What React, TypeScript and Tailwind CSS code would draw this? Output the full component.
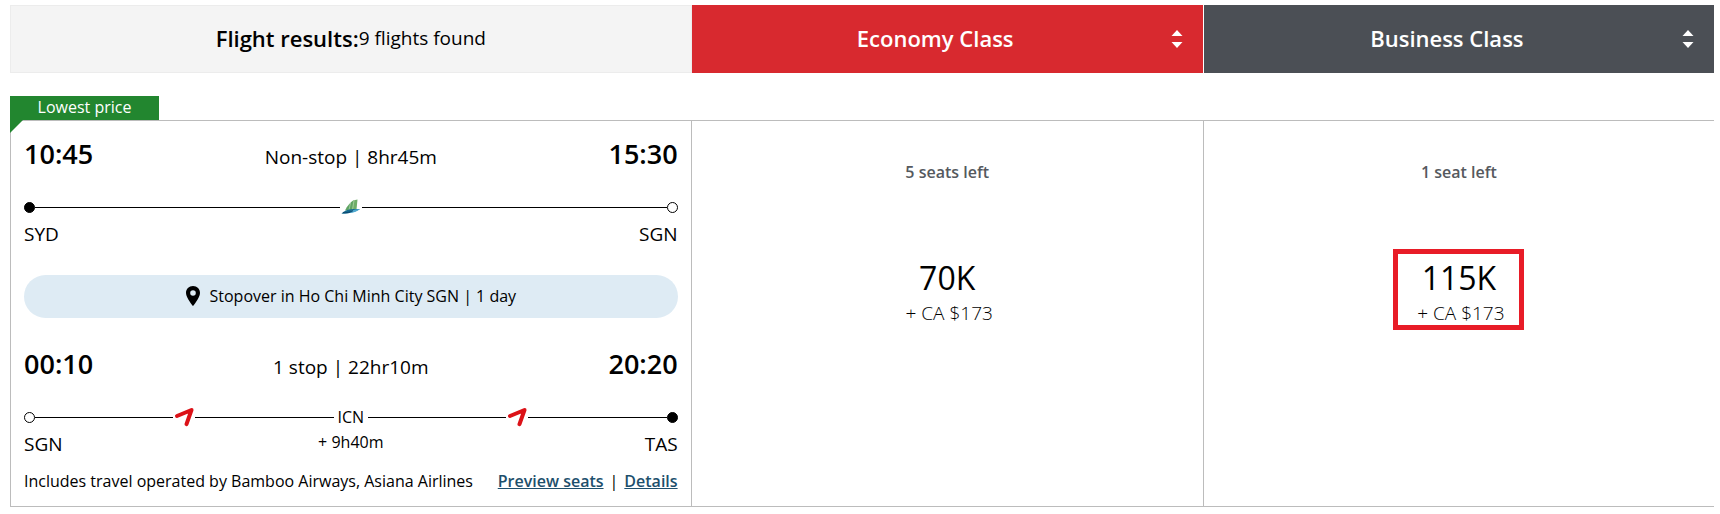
import React from 'react';

type Stop = {
    code: string;
    layover: string;
};

type Leg = {
    departs: string;
    arrives: string;
    from: string;
    to: string;
    summary: string;
    carriers: ('bamboo' | 'asiana')[];
    stop?: Stop;
    fromFilled: boolean;
};

type Fare = {
    id: string;
    seats: string;
    points: string;
    cash: string;
    highlighted: boolean;
};

const legs: Leg[] = [
    {
        departs: '10:45',
        arrives: '15:30',
        from: 'SYD',
        to: 'SGN',
        summary: 'Non-stop | 8hr45m',
        carriers: ['bamboo'],
        fromFilled: true,
    },
    {
        departs: '00:10',
        arrives: '20:20',
        from: 'SGN',
        to: 'TAS',
        summary: '1 stop | 22hr10m',
        carriers: ['asiana', 'asiana'],
        stop: { code: 'ICN', layover: '+ 9h40m' },
        fromFilled: false,
    },
];

const fares: Fare[] = [
    {
        id: 'economy',
        seats: '5 seats left',
        points: '70K',
        cash: '+ CA $173',
        highlighted: false,
    },
    {
        id: 'business',
        seats: '1 seat left',
        points: '115K',
        cash: '+ CA $173',
        highlighted: true,
    },
];

const SortIcon = () => (
    <svg className="h-5 w-3" viewBox="0 0 12 20" fill="currentColor">
        <path d="M6 1l5.5 6H.5z" />
        <path d="M6 19l5.5-6H.5z" />
    </svg>
);

const PinIcon = () => (
    <svg className="h-5 w-4" viewBox="0 0 16 20">
        <path
            fillRule="evenodd"
            d="M8 0C3.900 0 1 3 1 6.900 1 11.500 8 20 8 20s7-8.500 7-13.100C15 3 12.100 0 8 0zm0 4.200a2.800 2.800 0 1 1 0 5.600 2.800 2.800 0 0 1 0-5.600z"
        />
    </svg>
);

// Small airline marks that sit on the route line
const CarrierIcon = ({ carrier }: { carrier: 'bamboo' | 'asiana' }) =>
    carrier === 'bamboo' ? (
        <svg className="h-5 w-[22px]" viewBox="0 0 22 20">
            <path d="M5 13.500C7 9 10.500 5 13.500 3.200L13 13z" fill="#5fa463" />
            <path d="M13 3.500L17.500 2.500 16.500 12.500 12 13z" fill="#6fae68" />
            <path d="M10.500 6L9 13M14 3.500L12.500 13" stroke="#c3dfbd" strokeWidth="0.6" />
            <path d="M1.500 16.500C5 12.500 11 11.500 20 12c-3 1.800-6 3-9.500 3.800-3 .8-6 1.200-9 .7z" fill="#12698f" />
            <path d="M10.500 16c3.500-.4 7-1.800 9.500-4-3.500 0-6.500.8-9 2z" fill="#4fa9cf" />
            <path d="M3 15.500c3.500.5 7-.2 10-1.800" stroke="#0c4770" strokeWidth="1" fill="none" />
        </svg>
    ) : (
        <svg className="h-5 w-[22px]" viewBox="0 0 22 20">
            <path
                d="M4 9L18.500 3 13.500 17.200"
                fill="none"
                stroke="#dc1218"
                strokeWidth="4"
                strokeLinecap="round"
                strokeLinejoin="round"
            />
            <path d="M14 5.500L20.300 1.500 17 10z" fill="#dc1218" />
        </svg>
    );

const Dot = ({ filled }: { filled: boolean }) => (
    <span
        className={`size-[11px] rounded-full border border-black ${filled ? 'bg-black' : 'bg-white'}`}
    />
);

const Line = () => <span className="h-px flex-1 bg-black" />;

const FlightLeg = ({ leg }: { leg: Leg }) => (
    <section>
        <div className="grid grid-cols-[1fr_auto_1fr] items-baseline leading-9">
            <span className="text-[27px] leading-9 font-semibold">{leg.departs}</span>
            <span className="text-[19px] leading-9">{leg.summary}</span>
            <span className="text-right text-[27px] leading-9 font-semibold">{leg.arrives}</span>
        </div>

        <div className="mt-[22px] flex h-5 items-center">
            <Dot filled={leg.fromFilled} />
            <Line />
            <CarrierIcon carrier={leg.carriers[0]} />
            <Line />
            {leg.stop && (
                <>
                    <span className="px-1 text-base leading-5">{leg.stop.code}</span>
                    <Line />
                    <CarrierIcon carrier={leg.carriers[1]} />
                    <Line />
                </>
            )}
            <Dot filled={!leg.fromFilled} />
        </div>

        <div className="mt-[3px] grid grid-cols-[1fr_auto_1fr] text-[19px] leading-7">
            <span>{leg.from}</span>
            <span className="text-base leading-6">{leg.stop?.layover}</span>
            <span className="text-right">{leg.to}</span>
        </div>
    </section>
);

const CabinButton = ({ label, className }: { label: string; className: string }) => (
    <button
        type="button"
        className={`flex items-center pr-5 pl-2 text-[22px] font-semibold text-white ${className}`}
    >
        <span className="flex-1 pb-0.5 text-center">{label}</span>
        <SortIcon />
    </button>
);

const App = () => {
    return (
        <main className="bg-white pt-[5px] pr-1.5 pb-2 pl-2.5 font-['Open_Sans',sans-serif] text-black">
            {/* Cabin headers */}
            <header className="grid h-[68px] grid-cols-[40%_30%_30%]">
                <div className="flex items-center justify-center border border-[#ececec] bg-[#f4f4f4] pb-0.5">
                    <h1 className="text-[22px] font-semibold">Flight results:</h1>
                    <span className="text-[19px]">9 flights found</span>
                </div>
                <CabinButton label="Economy Class" className="bg-[#d8292f]" />
                <CabinButton
                    label="Business Class"
                    className="border-l border-white bg-[#4b4f55]"
                />
            </header>

            {/* Result card */}
            <article className="mt-[23px]">
                <div className="h-6 w-[149px] bg-[#22862f] text-center text-base leading-[22px] text-white">
                    Lowest price
                </div>
                <div className="relative grid grid-cols-[40%_30%_30%] border-y border-[#bcbcbc]">
                    <span className="absolute -top-px left-0 size-[13px] bg-[#22862f] [clip-path:polygon(0_0,100%_0,0_100%)]" />

                    <div className="border-x border-[#bcbcbc] px-[13px] pt-[15px] pb-[13px]">
                        <FlightLeg leg={legs[0]} />
                        <div className="mt-[27px] mb-7 flex h-[43px] items-center justify-center gap-2 rounded-full bg-[#deebf4] pb-0.5 text-base">
                            <PinIcon />
                            Stopover in Ho Chi Minh City SGN | 1 day
                        </div>
                        <FlightLeg leg={legs[1]} />

                        <div className="mt-[11px] flex justify-between text-base leading-6">
                            <p>Includes travel operated by Bamboo Airways, Asiana Airlines</p>
                            <p className="flex gap-1.5">
                                <a href="#seats" className="font-semibold text-[#1d4f6c] underline">
                                    Preview seats
                                </a>
                                <span>|</span>
                                <a href="#details" className="font-semibold text-[#1d4f6c] underline">
                                    Details
                                </a>
                            </p>
                        </div>
                    </div>

                    {fares.map((fare) => (
                        <div
                            key={fare.id}
                            className="flex flex-col items-center border-[#bcbcbc] pt-[39px] last:border-l"
                        >
                            <p className="text-base leading-6 font-semibold text-[#55595e]">{fare.seats}</p>
                            <div
                                className={`mt-[65px] flex h-[81px] w-[131px] flex-col items-center border-[5px] pt-1 ${fare.highlighted ? 'border-[#e81c27]' : 'border-transparent'}`}
                            >
                                <p className="text-[32px] leading-10">{fare.points}</p>
                                <p className="pl-1 text-[19px] leading-[30px] font-light">{fare.cash}</p>
                            </div>
                        </div>
                    ))}
                </div>
            </article>
        </main>
    );
};

export default App;
